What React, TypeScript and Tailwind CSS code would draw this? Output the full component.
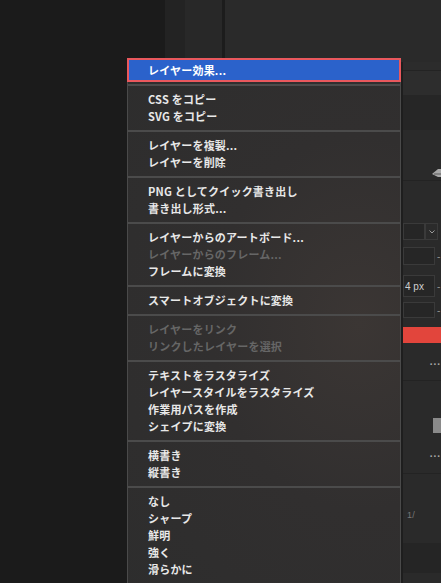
import React from "react";

type Item = { label: string; disabled?: boolean };

const groups: Item[][] = [
  [{ label: "CSS をコピー" }, { label: "SVG をコピー" }],
  [{ label: "レイヤーを複製..." }, { label: "レイヤーを削除" }],
  [{ label: "PNG としてクイック書き出し" }, { label: "書き出し形式..." }],
  [
    { label: "レイヤーからのアートボード..." },
    { label: "レイヤーからのフレーム...", disabled: true },
    { label: "フレームに変換" },
  ],
  [{ label: "スマートオブジェクトに変換" }],
  [
    { label: "レイヤーをリンク", disabled: true },
    { label: "リンクしたレイヤーを選択", disabled: true },
  ],
  [
    { label: "テキストをラスタライズ" },
    { label: "レイヤースタイルをラスタライズ" },
    { label: "作業用パスを作成" },
    { label: "シェイプに変換" },
  ],
  [{ label: "横書き" }, { label: "縦書き" }],
  [{ label: "なし" }, { label: "シャープ" }, { label: "鮮明" }, { label: "強く" }, { label: "滑らかに" }],
];

function Separator() {
  return (
    <div className="py-[5px]">
      <div className="h-[2px] bg-[#4b4b4b]" />
    </div>
  );
}

function ContextMenu() {
  return (
    <div className="absolute left-[127px] top-[58px] flex w-[274px] flex-col">
      <div className="flex h-[24px] items-center border-2 border-[#e9585d] bg-[#2b62cb] pl-[19px] text-white">
        レイヤー効果...
      </div>
      <div className="flex flex-col border-x border-[#4a4a4a] bg-[radial-gradient(ellipse_at_85%_45%,#3b3634_0%,#312f2f_45%,#2d2d2d_100%)] pb-10">
        <div className="pt-[2px] pb-[5px]">
          <div className="h-[2px] bg-[#4b4b4b]" />
        </div>
        {groups.map((g, gi) => (
          <React.Fragment key={gi}>
            {gi > 0 && <Separator />}
            {g.map((it) => (
              <div
                key={it.label}
                className={`flex h-[17px] items-center pl-[20px] ${it.disabled ? "text-[#666666]" : "text-[#e8e8e8]"}`}
              >
                {it.label}
              </div>
            ))}
          </React.Fragment>
        ))}
      </div>
    </div>
  );
}

function Box({ h, children }: { h: string; children?: React.ReactNode }) {
  return (
    <div className={`flex ${h} items-center`}>
      <div className="flex h-full w-[32px] items-center border border-[#3a3a3a] bg-[#262626] pl-[1px] font-['Liberation_Sans',sans-serif] text-[10px] font-normal tracking-normal text-[#d0d0d0]">
        {children}
      </div>
      <span className="ml-[2px] text-[9px] leading-none text-[#8a8a8a]">-</span>
    </div>
  );
}

function SidePanel() {
  return (
    <div className="flex w-[40px] flex-col">
      <div className="h-[62px] shrink-0 bg-[#2a2a2a]" />
      <div className="flex flex-1 flex-col border-l-2 border-[#1e1e1e] bg-[#2a2a2a]">
        <div className="h-[8px] bg-[#2c2c2c]" />
        <div className="h-[25px] border-t border-[#232323] bg-[#2d2d2d]" />
        <div className="h-[35px] bg-[#262626]" />
        <div className="flex h-[50px] items-end justify-end pb-[2px]">
          <svg width="9" height="10" viewBox="0 0 9 10">
            <path d="M0 6 L6 1 L9 1 L9 9 L6 9 Z" fill="#a8a8a8" />
            <path d="M2 6 L9 6" stroke="#5a5a5a" strokeWidth="1" />
          </svg>
        </div>
        <div className="h-[43px] border-t border-[#232323]" />
        <div className="flex h-[17px]">
          <div className="w-[22px] border border-[#3a3a3a] bg-[#262626]" />
          <div className="flex w-[13px] items-center justify-center border border-[#3a3a3a] bg-[#2b2b2b]">
            <svg width="6" height="4" viewBox="0 0 6 4">
              <path d="M0.5 0.5 L3 3 L5.5 0.5" stroke="#9a9a9a" fill="none" strokeWidth="1" />
            </svg>
          </div>
        </div>
        <div className="h-[7px]" />
        <Box h="h-[18px]" />
        <div className="h-[10px]" />
        <Box h="h-[22px]">4 px</Box>
        <div className="h-[5px]" />
        <Box h="h-[16px]" />
        <div className="h-[9px]" />
        <div className="h-[16px] bg-[#e2453c]" />
        <div className="flex h-[37px] items-center justify-end font-['Liberation_Sans',sans-serif] text-[10px] leading-none text-[#aaaaaa]">
          <span className="tracking-[1px]">...</span>
        </div>
        <div className="flex h-[93px] flex-col items-end border-t border-[#232323] pt-[37px]">
          <div className="h-[15px] w-[8px] bg-[#8a8a8a]" />
          <span className="mt-[16px] font-['Liberation_Sans',sans-serif] text-[10px] leading-none tracking-[1px] text-[#aaaaaa]">...</span>
        </div>
        <div className="flex h-[70px] items-start border-t border-[#232323] pl-[4px] pt-[37px] font-['Liberation_Sans',sans-serif] text-[9px] font-normal leading-none text-[#777777]">
          1/
        </div>
        <div className="h-[30px] bg-[#252525]" />
        <div className="flex-1" />
      </div>
    </div>
  );
}

export default function App() {
  return (
    <div className="relative flex h-[583px] w-[441px] overflow-hidden bg-[#1b1b1b] font-['Noto_Sans_CJK_JP','Noto_Sans',sans-serif] text-[11px] font-bold tracking-[0.2px]">
      <div className="w-[165px] bg-[#1b1b1b]" />
      <div className="w-[20px] bg-[#232323]" />
      <div className="w-[37px] bg-[#282828]" />
      <div className="w-[3px] bg-[#1c1c1c]" />
      <div className="flex flex-1">
        <div className="w-[176px] bg-[#2a2a2a]" />
        <SidePanel />
      </div>
      <ContextMenu />
    </div>
  );
}
